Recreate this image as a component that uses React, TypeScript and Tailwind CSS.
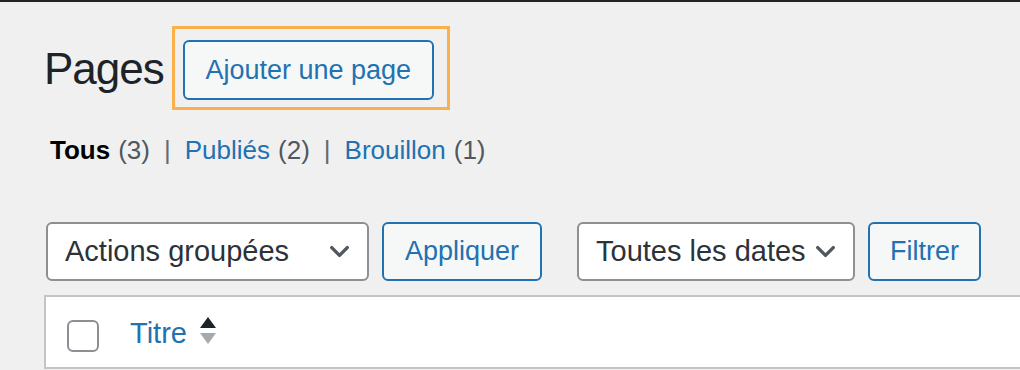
import { ChevronDown } from 'lucide-react';

const font = { fontFamily: '"Liberation Sans", Arial, sans-serif' };

function Select({ label, width }: { label: string; width: string }) {
  return (
    <div
      className={`flex items-center justify-between h-[59px] ${width} pl-[17px] pr-[12px] bg-white border-2 border-[#8c8f94] rounded-[6px] text-[29px] text-[#2c3338]`}
    >
      <span>{label}</span>
      <ChevronDown size={31} strokeWidth={2.6} className="text-[#50575e]" />
    </div>
  );
}

function Btn({ label, width }: { label: string; width: string }) {
  return (
    <button
      className={`flex items-center justify-center h-[59px] ${width} bg-[#f6f7f7] border-2 border-[#2271b1] rounded-[6px] text-[27px] text-[#2271b1]`}
    >
      {label}
    </button>
  );
}

export default function App() {
  return (
    <div
      className="w-[1020px] h-[370px] overflow-hidden bg-[#f0f0f1] border-t-2 border-[#1d2327]"
      style={font}
    >
      {/* header */}
      <div className="flex items-center pl-[44px] mt-[24px] h-[84px]">
        <h1 className="text-[44px] leading-none tracking-[-1px] text-[#1d2327] mt-[2px]">Pages</h1>
        <div className="ml-[8px] border-[3px] border-[#fbb04e] pl-[8px] pr-[13px] pt-[11px] pb-[7px]">
          <button className="flex items-center justify-center w-[251px] h-[60px] bg-[#f6f7f7] border-2 border-[#2271b1] rounded-[6px] text-[27px] text-[#2271b1]">
            Ajouter une page
          </button>
        </div>
      </div>

      {/* status links */}
      <div className="flex items-center pl-[50px] mt-[24px] text-[26px] leading-[32px] text-[#50575e]">
        <span className="font-bold text-black">Tous</span>
        <span className="ml-[8px]">(3)</span>
        <span className="mx-[14px] text-[#646970]">|</span>
        <span className="text-[#2271b1]">Publiés</span>
        <span className="ml-[8px]">(2)</span>
        <span className="mx-[14px] text-[#646970]">|</span>
        <span className="text-[#2271b1]">Brouillon</span>
        <span className="ml-[8px]">(1)</span>
      </div>

      {/* toolbar */}
      <div className="flex items-center pl-[46px] mt-[56px]">
        <Select label="Actions groupées" width="w-[323px]" />
        <div className="ml-[13px]">
          <Btn label="Appliquer" width="w-[160px]" />
        </div>
        <div className="ml-[35px]">
          <Select label="Toutes les dates" width="w-[278px]" />
        </div>
        <div className="ml-[13px]">
          <Btn label="Filtrer" width="w-[113px]" />
        </div>
      </div>

      {/* table header */}
      <div className="ml-[44px] mt-[14px] bg-white border-2 border-r-0 border-[#c3c4c7] h-[74px] flex items-center">
        <div className="ml-[21px] mt-[8px] w-[32px] h-[32px] rounded-[6px] border-2 border-[#8c8f94] bg-white" />
        <span className="ml-[31px] mt-[4px] text-[29px] text-[#2271b1]">Titre</span>
        <svg width="18" height="28" viewBox="0 0 18 28" className="ml-[12px] -mt-[2px]">
          <polygon points="9,0 17,11 1,11" fill="#1d2327" />
          <polygon points="1,16 17,16 9,27" fill="#a7aaad" />
        </svg>
      </div>
    </div>
  );
}
